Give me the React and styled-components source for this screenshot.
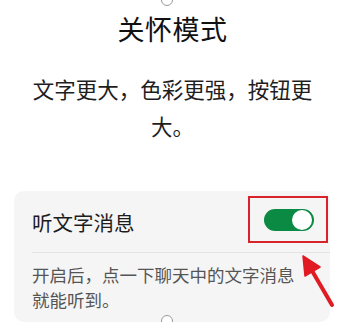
import React, { useState } from 'react';
import styled, { createGlobalStyle } from 'styled-components';

const GlobalStyle = createGlobalStyle`
  html, body {
    margin: 0;
    padding: 0;
    background: #ffffff;
  }
  body {
    width: 345px;
    height: 322px;
    overflow: hidden;
    font-family: "Noto Sans CJK SC", "Noto Sans", sans-serif;
    color: #1a1a1a;
  }
`;

const Page = styled.div`
  position: relative;
  width: 345px;
  height: 322px;
  overflow: hidden;
  display: flex;
  flex-direction: column;
  align-items: center;
`;

const Title = styled.h1`
  margin: 12px 0 0;
  font-size: 27px;
  font-weight: 400;
  line-height: 34px;
  letter-spacing: 0.5px;
  text-align: center;
  color: #111;
`;

const Lead = styled.p`
  margin: 24px 0 0;
  width: 292px;
  font-size: 21.5px;
  line-height: 37px;
  text-align: center;
  color: #1e1e1e;
`;

const Card = styled.section`
  align-self: stretch;
  margin: 47px 15px 0 14px;
  padding: 0 0 0 18px;
  background: #f5f5f5;
  border-radius: 10px;
  flex: 1;
`;

const Row = styled.div`
  display: flex;
  align-items: center;
  justify-content: space-between;
  height: 61px;
  border-bottom: 1px solid #e4e4e4;
  padding-right: 2px;
`;

const RowLabel = styled.span`
  font-size: 20.5px;
  color: #1d1d1d;
`;

const Highlight = styled.div`
  position: relative;
  top: -2px;
  display: flex;
  align-items: center;
  justify-content: center;
  width: 76px;
  height: 43px;
  border: 2px solid #d8232a;
`;

const Switch = styled.button`
  position: relative;
  width: 50px;
  height: 22px;
  padding: 0;
  border: none;
  border-radius: 11px;
  background: ${p => (p.on ? '#0b8a43' : '#c8c8c8')};
  cursor: pointer;
  margin-left: 2px;
`;

const Knob = styled.span`
  position: absolute;
  top: 1px;
  left: ${p => (p.on ? '28px' : '1px')};
  width: 20px;
  height: 20px;
  border-radius: 50%;
  background: #ffffff;
`;

const Hint = styled.p`
  margin: 9px 20px 0 0;
  font-size: 17.5px;
  line-height: 25px;
  color: #555;
`;

const Marker = styled.span`
  position: absolute;
  left: 161px;
  width: 10px;
  height: 10px;
  border: 1px solid #9a9a9a;
  border-radius: 50%;
  background: #fff;
  top: ${p => p.top}px;
`;

const Arrow = styled.svg`
  position: absolute;
  left: 296px;
  top: 250px;
`;

export default function App() {
  const [on, setOn] = useState(true);
  return (
    <Page>
      <GlobalStyle />
      <Marker top={-6} />
      <Title>关怀模式</Title>
      <Lead>文字更大，色彩更强，按钮更大。</Lead>
      <Card>
        <Row>
          <RowLabel>听文字消息</RowLabel>
          <Highlight>
            <Switch on={on ? 1 : 0} onClick={() => setOn(!on)}>
              <Knob on={on ? 1 : 0} />
            </Switch>
          </Highlight>
        </Row>
        <Hint>开启后，点一下聊天中的文字消息就能听到。</Hint>
      </Card>
      <Marker top={315} />
      <Arrow width="45" height="62" viewBox="0 0 45 62">
        <path d="M36 55 L15 19" stroke="#e01b22" strokeWidth="4" strokeLinecap="round" fill="none" />
        <path d="M7 6 L24 17 L9 26 Z" fill="#e01b22" stroke="#e01b22" strokeWidth="1.5" strokeLinejoin="round" />
      </Arrow>
    </Page>
  );
}
